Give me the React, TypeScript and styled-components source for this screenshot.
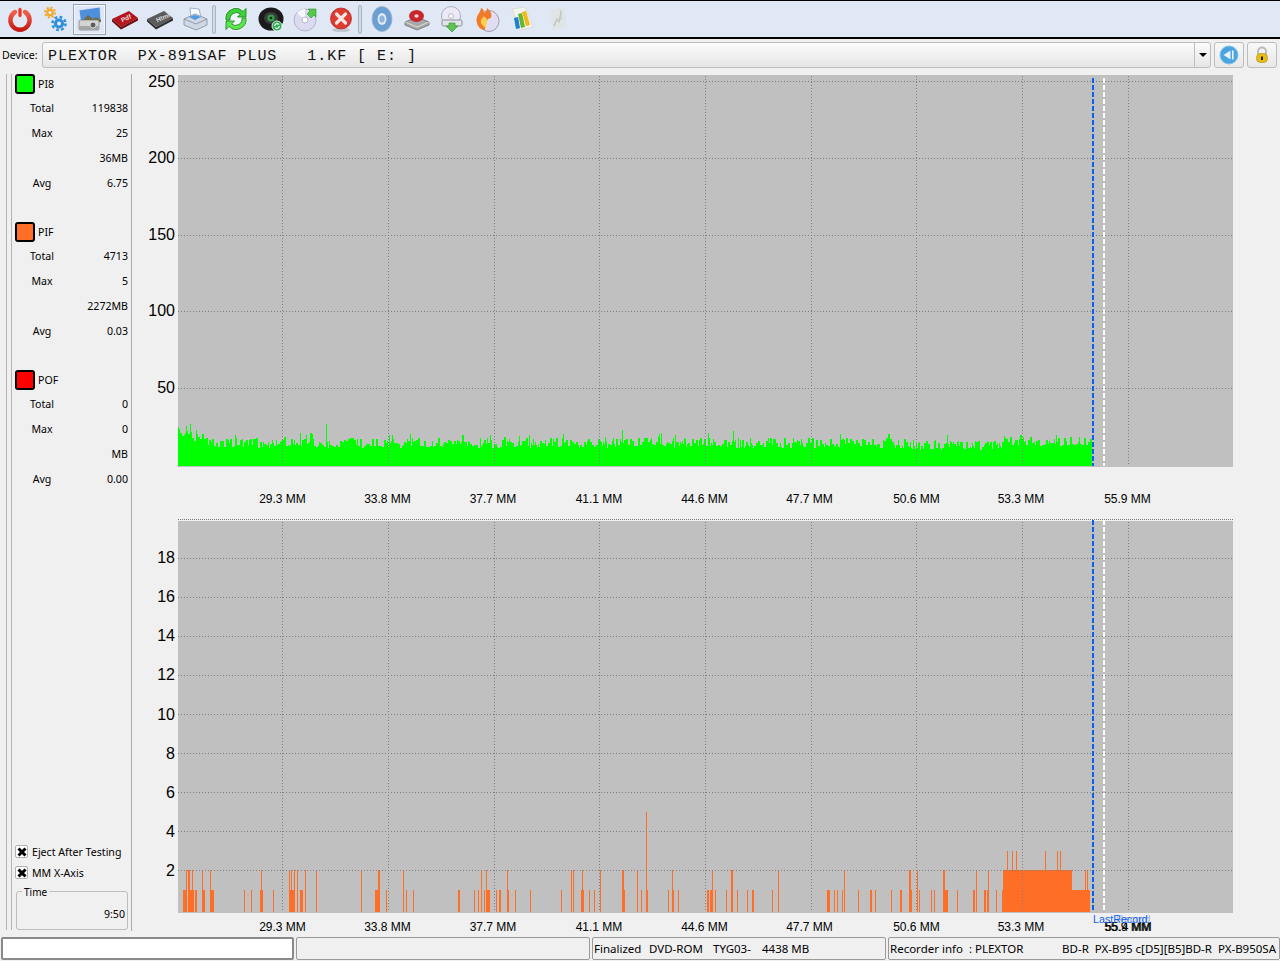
import React from "react";
import styled, { createGlobalStyle } from "styled-components";

const Global = createGlobalStyle`
  html, body { margin: 0; padding: 0; background: #f0f0f0; }
  body { font-family: "Noto Sans", "Liberation Sans", sans-serif; color: #000; }
`;

const Page = styled.div`
  width: 1280px;
  height: 961px;
  overflow: hidden;
  display: flex;
  flex-direction: column;
  background: #f0f0f0;
  font-size: 10.6px;
`;

const Toolbar = styled.div`
  height: 36px;
  flex: none;
  display: flex;
  align-items: center;
  padding-left: 2px;
  background: #dfe8f4;
  border-top: 1px solid #000;
  border-bottom: 2px solid #000;
`;

const ToolButton = styled.div<{ $active?: boolean }>`
  width: 35px;
  height: 33px;
  flex: none;
  box-sizing: border-box;
  display: flex;
  align-items: center;
  justify-content: center;
  border: 1px solid transparent;
  box-shadow: ${(p) => (p.$active ? "inset 0 0 0 1px #9aa3ad, inset 0 0 0 2px #f4f7fb" : "none")};
  svg { width: 28px; height: 28px; display: block; }
`;

const ToolSep = styled.div`
  width: 4px;
  height: 29px;
  flex: none;
  margin-right: 2px;
  border: 1px solid #a9b3bf;
  border-radius: 2px;
  box-sizing: border-box;
  background: #d3dbe6;
`;

const DeviceRow = styled.div`
  height: 26px;
  margin-top: 3px;
  flex: none;
  display: flex;
  align-items: center;
  padding-left: 2px;
`;

const DeviceLabel = styled.span`
  width: 40px;
  flex: none;
`;

const Combo = styled.div`
  width: 1169px;
  height: 26px;
  flex: none;
  box-sizing: border-box;
  display: flex;
  align-items: center;
  border: 1px solid #bdbdbd;
  border-radius: 3px;
  background: linear-gradient(#fbfbfb, #e6e6e6);
`;

const ComboText = styled.span`
  flex: 1;
  padding: 2px 0 0 5px;
  font-family: "Liberation Mono", monospace;
  font-size: 15px;
  letter-spacing: 0.97px;
  white-space: pre;
  color: #111;
`;

const ComboArrow = styled.div`
  width: 15px;
  height: 100%;
  flex: none;
  display: flex;
  align-items: center;
  justify-content: center;
  border-left: 1px solid #bdbdbd;
  &::after {
    content: "";
    border-left: 4px solid transparent;
    border-right: 4px solid transparent;
    border-top: 4px solid #000;
  }
`;

const SideButton = styled.div`
  width: 30px;
  height: 26px;
  flex: none;
  margin-left: 3px;
  box-sizing: border-box;
  display: flex;
  align-items: center;
  justify-content: center;
  border: 1px solid #bdbdbd;
  border-radius: 3px;
  background: linear-gradient(#f8f8f8, #e8e8e8);
  svg { width: 20px; height: 20px; display: block; }
`;

const Main = styled.div`
  height: 857px;
  margin-top: 6px;
  flex: none;
  display: flex;
`;

const Sidebar = styled.aside`
  width: 126px;
  margin-left: 6px;
  flex: none;
  display: flex;
  box-sizing: border-box;
  border-right: 1px solid #aaa;
`;

const Rail = styled.div`
  width: 6px;
  height: 856px;
  flex: none;
  box-sizing: border-box;
  border-left: 1px solid #b5b5b5;
  border-right: 1px solid #b5b5b5;
`;

const SideContent = styled.div`
  flex: 1;
  min-width: 0;
  display: flex;
  flex-direction: column;
  padding: 0 3px 1px 3px;
`;

const Group = styled.section`
  margin-bottom: 26px;
`;

const GroupHeader = styled.div`
  height: 20px;
  display: flex;
  align-items: center;
  gap: 3px;
  margin-bottom: 2px;
`;

const GroupName = styled.span``;

const Swatch = styled.span<{ $color: string }>`
  width: 20px;
  height: 20px;
  box-sizing: border-box;
  border: 2px solid #000;
  border-radius: 3px;
  background: ${(p) => p.$color};
`;

const StatRow = styled.div`
  height: 25px;
  box-sizing: border-box;
  display: flex;
  align-items: center;
  padding: 0 0 2px 14px;
`;

const StatLabel = styled.span`
  width: 26px;
  text-align: center;
`;

const StatValue = styled.span`
  margin-left: auto;
`;

const Options = styled.div`
  margin-top: auto;
`;

const CheckRow = styled.div`
  height: 21px;
  display: flex;
  align-items: center;
  gap: 4px;
`;

const CheckBox = styled.span`
  width: 13px;
  height: 13px;
  box-sizing: border-box;
  border: 1px solid #b0b0b0;
  border-radius: 2px;
  background: #fff;
  display: flex;
  align-items: center;
  justify-content: center;
  svg { width: 10px; height: 10px; display: block; }
`;

const TimeBox = styled.div`
  position: relative;
  height: 39px;
  margin: 8px 0 0 1px;
  box-sizing: border-box;
  border: 1px solid #bdbdbd;
  border-radius: 3px;
  display: flex;
  align-items: flex-end;
  justify-content: flex-end;
  padding: 0 2px 8px 0;
`;

const TimeLegend = styled.span`
  position: absolute;
  top: -7px;
  left: 5px;
  padding: 0 2px;
  font-size: 10px;
  background: #f0f0f0;
`;

const Charts = styled.div`
  flex: 1;
  min-width: 0;
  display: flex;
  flex-direction: column;
`;

const ChartSvg = styled.svg`
  display: block;
  flex: none;
  font-family: "Liberation Sans", sans-serif;
`;

const StatusBar = styled.div`
  height: 23px;
  margin-top: 6px;
  flex: none;
  display: flex;
  gap: 2px;
  padding-left: 1px;
`;

const StatusCell = styled.div<{ $w: number; $white?: boolean }>`
  width: ${(p) => p.$w}px;
  flex: none;
  box-sizing: border-box;
  display: flex;
  align-items: center;
  justify-content: space-between;
  padding: 0 3px 0 1px;
  border: ${(p) => (p.$white ? "2px solid #8a8a8a" : "1px solid #9a9a9a")};
  border-radius: 2px;
  background: ${(p) => (p.$white ? "#fff" : "transparent")};
  font-size: 11.5px;
  white-space: pre;
`;

const StatusGroup = styled.div`
  display: flex;
`;

const StatusPart = styled.span<{ $w: number }>`
  width: ${(p) => p.$w}px;
  flex: none;
`;

/* ---------- chart data ---------- */

const VX = [282, 388, 494, 599, 705, 811, 916, 1022, 1128];
const LX = [282.5, 387.5, 493, 599, 704.5, 809.5, 916.5, 1021, 1127.5];
const XL = ["29.3 MM", "33.8 MM", "37.7 MM", "41.1 MM", "44.6 MM", "47.7 MM", "50.6 MM", "53.3 MM", "55.9 MM"];

function greenPath(): string {
  let s = 7;
  const r = () => {
    s = (s * 16807) % 2147483647;
    return s / 2147483647;
  };
  const spikes: Record<number, number> = {
    186: 426, 190: 424, 196: 430, 326: 424, 300: 433, 622: 430, 708: 433, 733: 431,
    312: 434, 490: 435, 840: 434, 1004: 436, 1056: 435,
  };
  let d = "";
  let top = 443;
  for (let x = 178; x < 1092; x++) {
    if (x % 2 === 0 || r() < 0.35) {
      let base = 443;
      if (x < 215) base = 432 + (x - 178) * 0.28;
      else if (x > 900 && x < 1003) base = 445;
      else if (x >= 1003) base = 441.5;
      top = Math.round(base + (r() - 0.5) * 10 - (r() < 0.08 ? 5 : 0));
    }
    const t = spikes[x] ?? top;
    d += `M${x} ${t}V466H${x + 1}V${t}Z`;
  }
  return d;
}

const LEVEL: Record<number, number> = { 1: 890, 2: 870, 3: 851, 5: 812 };
const BARS: [number, number, number][] = [
  [183, 4, 1], [188, 6, 1], [195, 2, 1], [202, 3, 1], [210, 2, 1], [212, 2, 1], [244, 1, 1], [251, 1, 1], [260, 3, 1], [273, 1, 1],
  [289, 6, 1], [300, 3, 1], [316, 1, 1], [361, 1, 1], [375, 5, 1], [386, 1, 1], [403, 1, 1], [406, 1, 1],
  [413, 1, 1], [458, 2, 1], [186, 1, 2], [188, 2, 2], [192, 1, 2], [202, 1, 2], [210, 1, 2], [261, 1, 2],
  [289, 1, 2], [291, 1, 2], [294, 1, 2], [297, 1, 2], [305, 1, 2], [316, 1, 2], [361, 1, 2], [378, 2, 2], [403, 1, 2],
  [474, 1, 1], [478, 1, 1], [481, 1, 2], [484, 1, 1], [486, 3, 1], [486, 1, 2], [489, 1, 1], [496, 1, 1],
  [499, 2, 1], [507, 2, 1], [507, 1, 2], [515, 1, 1], [530, 1, 1], [561, 1, 1], [571, 1, 2], [573, 1, 2],
  [581, 3, 1], [582, 1, 2], [589, 1, 1], [594, 1, 1], [600, 1, 2], [622, 3, 1], [622, 2, 2], [637, 1, 2],
  [641, 1, 1], [646, 2, 1], [646, 1, 5], [668, 1, 1], [672, 2, 1], [672, 1, 2], [678, 1, 1], [707, 2, 1],
  [710, 3, 1], [712, 1, 2], [715, 1, 1], [726, 1, 1],
  [731, 2, 2], [737, 1, 1], [747, 1, 1], [752, 2, 1], [772, 1, 1], [778, 1, 2], [827, 3, 1], [834, 1, 1],
  [837, 1, 1], [842, 1, 1], [844, 1, 2], [858, 1, 1], [870, 2, 1], [875, 1, 1], [891, 1, 1], [900, 2, 1],
  [909, 3, 1], [909, 2, 2], [917, 1, 2], [919, 1, 1], [931, 1, 1], [934, 1, 1], [943, 5, 1], [943, 2, 2],
  [957, 1, 1], [973, 2, 1], [976, 1, 2], [984, 2, 1], [987, 2, 1], [988, 1, 2], [996, 1, 1],
  [1002, 88, 1], [1003, 69, 2], [1085, 1, 2], [1087, 1, 2],
  [1007, 1, 3], [1012, 1, 3], [1016, 1, 3], [1045, 1, 3], [1057, 1, 3], [1060, 1, 3],
];

const GRID = "#7f7f7f";

const Grid: React.FC<{ top: number; bottom: number; rows: number[] }> = ({ top, bottom, rows }) => (
  <g stroke={GRID} strokeDasharray="1 2" shapeRendering="crispEdges">
    {VX.map((x) => (
      <line key={x} x1={x + 0.5} x2={x + 0.5} y1={top} y2={bottom} />
    ))}
    {rows.map((y) => (
      <line key={y} x1={178} x2={1233} y1={y + 0.5} y2={y + 0.5} />
    ))}
  </g>
);

const Markers: React.FC<{ top: number; bottom: number }> = ({ top, bottom }) => (
  <g strokeWidth={2} strokeDasharray="5 2" shapeRendering="crispEdges">
    <line x1={1093} x2={1093} y1={top} y2={bottom} stroke="#0a5ff0" />
    <line x1={1104} x2={1104} y1={top} y2={bottom} stroke="#ffffff" />
  </g>
);

const TOP_TICKS: [string, number, number][] = [
  ["250", 81, 87], ["200", 158, 163], ["150", 235, 240], ["100", 311, 316], ["50", 388, 393],
];
const BOTTOM_TICKS: [string, number, number][] = [
  ["18", 558, 563], ["16", 597, 602], ["14", 636, 641], ["12", 675, 680], ["10", 714, 720],
  ["8", 753, 759], ["6", 792, 798], ["4", 831, 837], ["2", 870, 876],
];

const TopChart = () => (
  <ChartSvg width={1148} height={445} viewBox="132 74 1148 445">
    <rect x={178} y={75} width={1055} height={392} fill="#c0c0c0" />
    <path d={greenPath()} fill="#00ff00" shapeRendering="crispEdges" />
    <Grid top={76} bottom={466} rows={TOP_TICKS.map((t) => t[1])} />
    <Markers top={78} bottom={466} />
    {TOP_TICKS.map(([t, , b]) => (
      <text key={t} x={175} y={b} textAnchor="end" fontSize={16} fill="#000">{t}</text>
    ))}
    {XL.map((t, i) => (
      <text key={t} x={LX[i]} y={503} textAnchor="middle" fontSize={12} fill="#000">{t}</text>
    ))}
  </ChartSvg>
);

const BottomChart = () => (
  <ChartSvg width={1148} height={412} viewBox="132 519 1148 412">
    <line x1={178} x2={1233} y1={519.5} y2={519.5} stroke="#777" strokeDasharray="1 1" shapeRendering="crispEdges" />
    <rect x={178} y={521} width={1055} height={392} fill="#c0c0c0" />
    <g fill="#ff6e26" shapeRendering="crispEdges">
      {BARS.map(([x, w, h], i) => (
        <rect key={i} x={x} y={LEVEL[h]} width={w} height={912 - LEVEL[h]} />
      ))}
    </g>
    <Grid top={522} bottom={912} rows={BOTTOM_TICKS.map((t) => t[1])} />
    <Markers top={520} bottom={912} />
    {BOTTOM_TICKS.map(([t, , b]) => (
      <text key={t} x={175} y={b} textAnchor="end" fontSize={16} fill="#000">{t}</text>
    ))}
    {XL.map((t, i) => (
      <text key={t} x={LX[i]} y={931} textAnchor="middle" fontSize={12} fill="#000">{t}</text>
    ))}
    <text x={1128.5} y={931} textAnchor="middle" fontSize={12} fill="#000">55.4 MM</text>
    <text x={1116} y={923} fontSize={10.7} fill="#9db4d8">Record</text>
    <text x={1093} y={923} fontSize={10.7} fill="#1560e8">LastRecord</text>
  </ChartSvg>
);

/* ---------- toolbar icons ---------- */

const V = "0 0 28 28";

const IconPower = () => (
  <svg viewBox={V}>
    <defs>
      <linearGradient id="pw" x1="0" y1="0" x2="0" y2="1">
        <stop offset="0" stopColor="#f2604c" />
        <stop offset="1" stopColor="#c41a14" />
      </linearGradient>
    </defs>
    <path d="M9 7a9.6 9.6 0 1 0 10 0" fill="none" stroke="url(#pw)" strokeWidth="4.4" strokeLinecap="round" />
    <rect x="12" y="2.5" width="4" height="10" rx="2" fill="#e8352a" stroke="#fbeae6" strokeWidth="0.7" />
  </svg>
);
const Gear: React.FC<{ cx: number; cy: number; r: number; fill: string }> = ({ cx, cy, r, fill }) => (
  <g>
    <circle cx={cx} cy={cy} r={r} fill="none" stroke={fill} strokeWidth={r * 0.4} strokeDasharray={`${r * 0.42} ${r * 0.36}`} />
    <circle cx={cx} cy={cy} r={r * 0.78} fill={fill} />
    <circle cx={cx} cy={cy} r={r * 0.3} fill="#e6eef8" />
  </g>
);
const IconGears = () => (
  <svg viewBox={V}>
    <Gear cx={9} cy={7.5} r={5} fill="#f0ab35" />
    <Gear cx={18} cy={18.5} r={6.5} fill="#2f8fdc" />
  </svg>
);
const IconCamera = () => (
  <svg viewBox={V}>
    <path d="M3 5l21-3 1 14-20 3z" fill="#4f90dd" stroke="#eef" strokeWidth="0.7" />
    <path d="M5 17l7-7 5 4 3-2 5 3v2L5 19z" fill="#6d6a48" />
    <rect x="3" y="15" width="20" height="10" rx="1.5" fill="#d4d4d0" stroke="#77787a" strokeWidth="0.7" />
    <rect x="3" y="21" width="20" height="4" rx="1.5" fill="#a4a5a6" />
    <circle cx="17" cy="20" r="3" fill="#5c5e60" stroke="#eee" strokeWidth="0.8" />
  </svg>
);
const IconBook: React.FC<{ fill: string; dark: string; label: string; ink: string }> = ({ fill, dark, label, ink }) => (
  <svg viewBox={V}>
    <path d="M1 14L18 6l9 7-17 9z" fill={fill} />
    <path d="M1 14l9 8v2.5l-9-8zM10 22l17-9v2.5l-17 9z" fill={dark} />
    <text x="10" y="16" fontSize="6.5" fontFamily="Liberation Sans" fontWeight="700" fill={ink} transform="rotate(-24 14 14)">{label}</text>
  </svg>
);
const IconPrinter = () => (
  <svg viewBox={V}>
    <path d="M9 3l9 1 2 8-10 2z" fill="#f8fbff" stroke="#8aa3c4" strokeWidth="0.8" />
    <path d="M3 14l11-5 12 5v6l-11 5-12-5z" fill="#cfd8e4" stroke="#7f8c9c" strokeWidth="0.8" />
    <path d="M3 14l12 5 11-5" fill="none" stroke="#7f8c9c" strokeWidth="0.8" />
    <path d="M8 12l6-2 6 2-6 3z" fill="#4f9ae0" />
  </svg>
);
const IconRefresh = () => (
  <svg viewBox={V}>
    <circle cx="14" cy="14" r="12" fill="#fff" opacity="0.6" />
    <path d="M4 15A10 10 0 0 1 21 6.5L24 3.5V12H15.5L18.5 9A6.5 6.5 0 0 0 8 15z" fill="#3ed23a" stroke="#1b8a22" strokeWidth="0.9" />
    <path d="M24 13A10 10 0 0 1 7 21.5L4 24.5V16H12.5L9.5 19A6.5 6.5 0 0 0 20 13z" fill="#5ee650" stroke="#1b8a22" strokeWidth="0.9" />
  </svg>
);
const IconBlackDisc = () => (
  <svg viewBox={V}>
    <ellipse cx="14" cy="14" rx="12.5" ry="11.5" fill="#1b1b1b" />
    <ellipse cx="14" cy="13" rx="7" ry="6" fill="#3c3c3c" />
    <circle cx="14" cy="13" r="3.6" fill="#2fa04a" />
    <circle cx="14" cy="13" r="1.3" fill="#0c2a12" />
    <circle cx="20" cy="21" r="5" fill="#2fae5a" stroke="#e6f4e6" strokeWidth="0.9" />
    <path d="M17.6 21a2.5 2.5 0 0 1 4.4-1.5M22.4 21a2.5 2.5 0 0 1-4.4 1.5" stroke="#fff" fill="none" strokeWidth="1.1" />
  </svg>
);
const IconCdArrow = () => (
  <svg viewBox={V}>
    <circle cx="13" cy="15" r="11" fill="#dcdaf0" stroke="#a9a8bd" strokeWidth="0.8" />
    <path d="M13 15L5 8a11 11 0 0 1 8-4z" fill="#f6f6fb" />
    <circle cx="13" cy="15" r="3" fill="#fff" stroke="#a9a8bd" strokeWidth="0.8" />
    <path d="M15 9l3-3-2-2h8v8l-2-2-3 3z" fill="#56c84e" stroke="#2f8f33" strokeWidth="0.6" />
  </svg>
);
const IconClose = () => (
  <svg viewBox={V}>
    <ellipse cx="14" cy="25" rx="9" ry="2" fill="#bfc6d0" />
    <circle cx="14" cy="13.5" r="10.5" fill="#dd3a30" stroke="#b22a22" strokeWidth="0.8" />
    <path d="M9.5 9l9 9M18.5 9l-9 9" stroke="#f7e6e2" strokeWidth="3.2" strokeLinecap="round" />
  </svg>
);
const IconBlueDisc = () => (
  <svg viewBox={V}>
    <ellipse cx="14" cy="14" rx="10" ry="12.5" fill="#6b9fd4" stroke="#9db0c9" strokeWidth="0.8" />
    <ellipse cx="14" cy="14" rx="4.5" ry="6" fill="#dfe8f4" />
    <ellipse cx="14" cy="14" rx="2.6" ry="3.6" fill="#8fb3da" />
  </svg>
);
const IconDriveRed = () => (
  <svg viewBox={V}>
    <path d="M2 17l12-5 12 5v3l-12 5-12-5z" fill="#a8a8a8" stroke="#666" strokeWidth="0.7" />
    <path d="M2 17l12 5 12-5" fill="none" stroke="#e8e8e8" strokeWidth="0.8" />
    <ellipse cx="13.5" cy="11" rx="7.5" ry="6" fill="#c9272e" />
    <ellipse cx="13.5" cy="11" rx="2.2" ry="1.8" fill="#f4d4d4" />
  </svg>
);
const IconDriveDown = () => (
  <svg viewBox={V}>
    <circle cx="13" cy="11" r="9.5" fill="#eceaf6" stroke="#9c9cb2" strokeWidth="0.8" />
    <circle cx="13" cy="11" r="2.4" fill="#fff" stroke="#9c9cb2" strokeWidth="0.7" />
    <rect x="4" y="15" width="20" height="6" rx="1.5" fill="#e2e6ea" stroke="#767a80" strokeWidth="0.8" />
    <path d="M11 18h6v3h3l-6 6-6-6h3z" fill="#5ec350" stroke="#2f8f33" strokeWidth="0.6" />
  </svg>
);
const IconBurn = () => (
  <svg viewBox={V}>
    <ellipse cx="16" cy="16" rx="10" ry="10.5" fill="#e2ddf0" stroke="#8e8aa0" strokeWidth="0.8" />
    <path d="M4 18C2 11 7 9 8 3c3 1 3 4 3 5 2-1 3-3 3-5 4 3 5 6 4 10-3 0-6 3-6 12-4 0-7-3-8-7z" fill="#f0792a" />
    <path d="M8 18c-1-4 2-5 3-7 1 2 4 2 3 6-1 2-1 4-1 6-2-1-4-3-5-5z" fill="#fbcf4e" />
  </svg>
);
const IconBars = () => (
  <svg viewBox={V}>
    <path d="M4 4l13-2 8 20-13 3z" fill="#f4f4ee" stroke="#d6d6cc" strokeWidth="0.7" />
    <path d="M6 13l4-1 2 11-4 1z" fill="#1d7fd0" />
    <path d="M10 9l4-1 3 14-4 1z" fill="#66b531" />
    <path d="M14 7l4-1 4 14-4 1z" fill="#f0b91c" />
  </svg>
);
const IconDim = () => (
  <svg viewBox={V} opacity="0.55">
    <path d="M7 5l14-2 3 19-14 3z" fill="#e2e2da" />
    <path d="M11 21l3-7 2 3 2-10" fill="none" stroke="#9aa58c" strokeWidth="1.2" />
    <path d="M18 5v10" stroke="#b0b0a4" strokeWidth="1.2" />
  </svg>
);
const IconBack = () => (
  <svg viewBox="0 0 20 20">
    <circle cx="10" cy="10" r="9" fill="#4ba3e0" stroke="#7cc3ee" strokeWidth="1" />
    <path d="M11.5 5.5v9L4.5 10z" fill="#e8f4fb" />
    <rect x="13" y="5.5" width="1.6" height="9" fill="#e8f4fb" />
  </svg>
);
const IconLock = () => (
  <svg viewBox="0 0 20 20">
    <path d="M6 9V6.5a4 4 0 0 1 8 0V9" fill="none" stroke="#bbb" strokeWidth="2" />
    <rect x="4.5" y="8.5" width="11" height="9" rx="4" fill="#e7bd16" stroke="#a88912" strokeWidth="0.6" />
    <rect x="9" y="11.5" width="2" height="3.5" fill="#2b2205" />
  </svg>
);
const IconX = () => (
  <svg viewBox="0 0 10 10">
    <path d="M1.5 1.5l7 7M8.5 1.5l-7 7" stroke="#000" strokeWidth="3" />
  </svg>
);

const STATS = [
  { name: "PI8", color: "#00ff00", rows: [["Total", "119838"], ["Max", "25"], ["", "36MB"], ["Avg", "6.75"]] },
  { name: "PIF", color: "#ff6e26", rows: [["Total", "4713"], ["Max", "5"], ["", "2272MB"], ["Avg", "0.03"]] },
  { name: "POF", color: "#ff0000", rows: [["Total", "0"], ["Max", "0"], ["", "MB"], ["Avg", "0.00"]] },
];

export default function App() {
  return (
    <Page>
      <Global />
      <Toolbar>
        <ToolButton><IconPower /></ToolButton>
        <ToolButton><IconGears /></ToolButton>
        <ToolButton $active><IconCamera /></ToolButton>
        <ToolButton><IconBook fill="#b3161c" dark="#6f0c10" label="Pdf" ink="#f3dcdc" /></ToolButton>
        <ToolButton><IconBook fill="#5b5b5b" dark="#2f2f2f" label="Html" ink="#dcdcdc" /></ToolButton>
        <ToolButton><IconPrinter /></ToolButton>
        <ToolSep />
        <ToolButton><IconRefresh /></ToolButton>
        <ToolButton><IconBlackDisc /></ToolButton>
        <ToolButton><IconCdArrow /></ToolButton>
        <ToolButton><IconClose /></ToolButton>
        <ToolSep />
        <ToolButton><IconBlueDisc /></ToolButton>
        <ToolButton><IconDriveRed /></ToolButton>
        <ToolButton><IconDriveDown /></ToolButton>
        <ToolButton><IconBurn /></ToolButton>
        <ToolButton><IconBars /></ToolButton>
        <ToolButton><IconDim /></ToolButton>
      </Toolbar>

      <DeviceRow>
        <DeviceLabel>Device:</DeviceLabel>
        <Combo>
          <ComboText>{"PLEXTOR  PX-891SAF PLUS   1.KF [ E: ]"}</ComboText>
          <ComboArrow />
        </Combo>
        <SideButton><IconBack /></SideButton>
        <SideButton><IconLock /></SideButton>
      </DeviceRow>

      <Main>
        <Sidebar>
          <Rail />
          <SideContent>
            {STATS.map((g) => (
              <Group key={g.name}>
                <GroupHeader>
                  <Swatch $color={g.color} />
                  <GroupName>{g.name}</GroupName>
                </GroupHeader>
                {g.rows.map(([l, v], i) => (
                  <StatRow key={i}>
                    <StatLabel>{l}</StatLabel>
                    <StatValue>{v}</StatValue>
                  </StatRow>
                ))}
              </Group>
            ))}
            <Options>
              <CheckRow><CheckBox><IconX /></CheckBox>Eject After Testing</CheckRow>
              <CheckRow><CheckBox><IconX /></CheckBox>MM X-Axis</CheckRow>
              <TimeBox>
                <TimeLegend>Time</TimeLegend>
                9:50
              </TimeBox>
            </Options>
          </SideContent>
        </Sidebar>
        <Charts>
          <TopChart />
          <BottomChart />
        </Charts>
      </Main>

      <StatusBar>
        <StatusCell $w={293} $white />
        <StatusCell $w={294} />
        <StatusCell $w={294}>
          <StatusGroup>
            <StatusPart $w={55}>Finalized</StatusPart>
            <StatusPart $w={64}>DVD-ROM</StatusPart>
            <StatusPart $w={49}>TYG03-</StatusPart>
            <StatusPart $w={60}>4438 MB</StatusPart>
          </StatusGroup>
        </StatusCell>
        <StatusCell $w={392}>
          <span>{"Recorder info  : PLEXTOR"}</span>
          <span>{"BD-R  PX-B95 c[D5][B5]BD-R  PX-B950SA"}</span>
        </StatusCell>
      </StatusBar>
    </Page>
  );
}
